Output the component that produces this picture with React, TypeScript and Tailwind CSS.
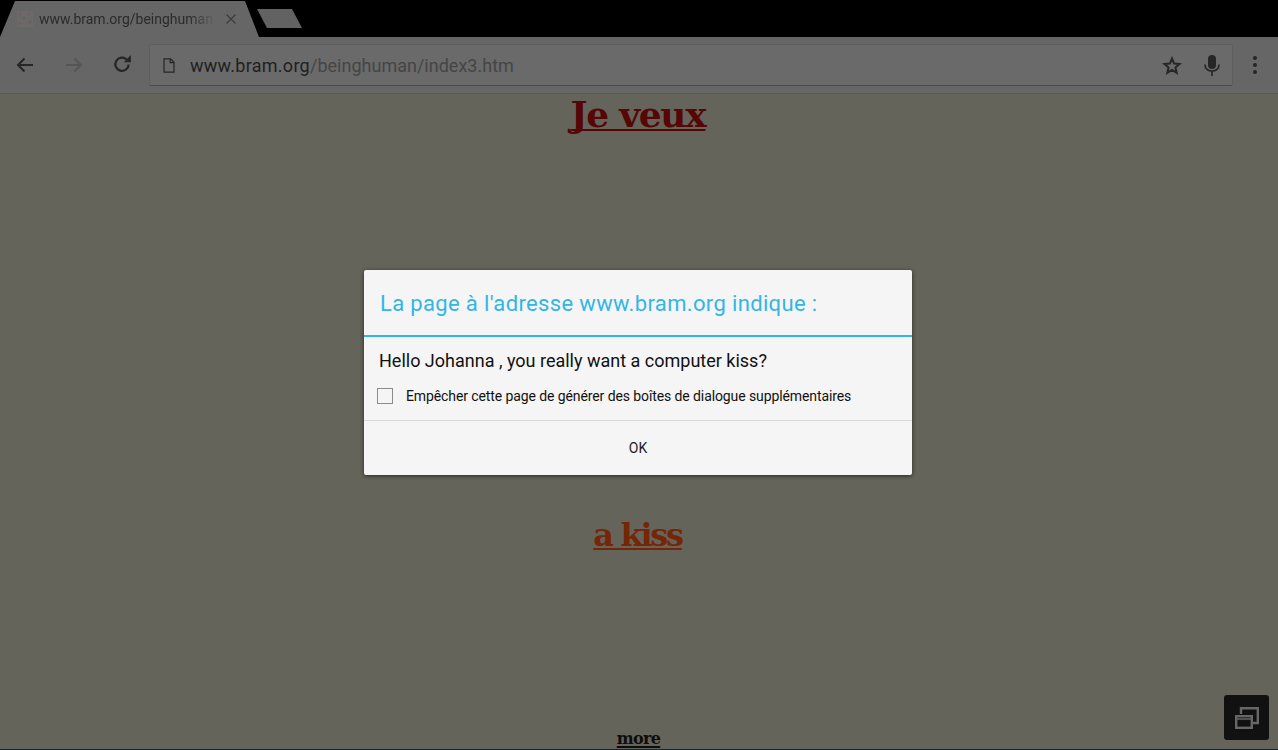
import React from 'react';

const roboto = "font-['Roboto',sans-serif]";
const serif = "font-['DejaVu_Serif',serif]";

function BackIcon({ className }: { className?: string }) {
  return (
    <svg viewBox="0 0 18 16" className={className} fill="none" stroke="currentColor" strokeWidth="2">
      <path d="M17 8H2M8.5 1.5 2 8l6.5 6.5" />
    </svg>
  );
}

function ReloadIcon() {
  return (
    <svg viewBox="0 0 18 18" className="w-5 h-5 text-[#262626]" fill="none">
      <path d="M15 9.500a6 6 0 1 1-1.800-4.600" stroke="currentColor" strokeWidth="2" />
      <path d="M10.600 7.400H17V1z" fill="currentColor" />
    </svg>
  );
}

function PageIcon() {
  return (
    <svg viewBox="0 0 12 15" className="w-3 h-[15px] text-[#262626]" fill="none" stroke="currentColor" strokeWidth="1.200">
      <path d="M1 .8h6.500L11 4.300v9.900H1zM7.200 .8v3.800H11" />
    </svg>
  );
}

function StarIcon() {
  return (
    <svg viewBox="0 0 20 19" className="w-5 h-[19px] text-[#262626]" fill="none" stroke="currentColor" strokeWidth="2">
      <path d="m10 2.600 2.100 5 5.400.4-4.100 3.500 1.300 5.300L10 14l-4.700 2.800 1.300-5.300L2.500 8l5.400-.4z" />
    </svg>
  );
}

function MicIcon() {
  return (
    <svg viewBox="0 0 16 21" className="w-4 h-[21px] text-[#262626]" fill="none">
      <rect x="4" y="0" width="8" height="14" rx="4" fill="currentColor" />
      <path d="M1 9.500c0 4 3 6.500 7 6.500s7-2.500 7-6.500M8 16v5" stroke="currentColor" strokeWidth="1.700" />
    </svg>
  );
}

function Favicon() {
  return (
    <svg viewBox="0 0 16 16" className="w-4 h-4 shrink-0">
      <rect width="16" height="16" fill="#6b6969" />
      <circle cx="3" cy="3" r="1.500" fill="#755f5f" />
      <circle cx="12" cy="2" r="1.500" fill="#755f5f" />
      <circle cx="7" cy="7" r="1.500" fill="#755a5a" />
      <circle cx="3" cy="12" r="1.500" fill="#755f5f" />
      <circle cx="13" cy="11" r="1.500" fill="#755a5a" />
    </svg>
  );
}

export default function App() {
  return (
    <div className={`relative w-[1278px] h-[750px] overflow-hidden bg-[#65645a] flex flex-col ${roboto}`}>
      {/* Tab strip */}
      <div className="h-[37px] bg-black flex shrink-0">
        <div className="w-[259px] h-9 mt-px bg-[#666666] [clip-path:polygon(0_100%,15px_0,245px_0,100%_100%)] flex items-center pl-[17px]">
          <Favicon />
          <div className="ml-1.5 w-[177px] whitespace-nowrap text-[14px] text-[#2b2b2b] mask-r-from-[85%] mask-r-to-100%">
            www.bram.org/beinghuman
          </div>
          <svg viewBox="0 0 10 10" className="ml-2.5 w-2.5 h-2.5 text-[#3d3d3d]" stroke="currentColor" strokeWidth="1.300">
            <path d="m.5.5 9 9M9.500.5l-9 9" />
          </svg>
        </div>
        <div className="-ml-0.5 mt-[9px] w-[45px] h-[19px] bg-[#626262] [clip-path:polygon(0_0,35px_0,100%_100%,10px_100%)]" />
      </div>

      {/* Toolbar */}
      <div className="h-[57px] bg-[#666666] border-b border-[#5a5a5a] shrink-0 flex items-center">
        <div className="w-[149px] flex items-center pl-4">
          <BackIcon className="w-[18px] h-4 text-[#262626]" />
          <BackIcon className="w-[18px] h-4 text-[#555555] ml-[31px] -scale-x-100" />
          <div className="ml-[29px] -mt-0.5"><ReloadIcon /></div>
        </div>
        <div className="w-[1084px] h-[42px] rounded-[2px] bg-[#6a6a6a] border border-[#5e5e5e] border-b-[#4a4a4a] flex items-center pl-[13px] pr-3">
          <PageIcon />
          <div className="ml-[15px] text-[18px] whitespace-nowrap text-[#1f1f1f] tracking-[0.27px]">
            www.bram.org<span className="text-[#454545] tracking-[0.01px]">/beinghuman/index3.htm</span>
          </div>
          <div className="ml-auto flex items-center gap-[22px]">
            <StarIcon />
            <MicIcon />
          </div>
        </div>
        <div className="ml-[20px] flex flex-col gap-[3px]">
          <div className="w-1 h-1 rounded-full bg-[#262626]" />
          <div className="w-1 h-1 rounded-full bg-[#262626]" />
          <div className="w-1 h-1 rounded-full bg-[#262626]" />
        </div>
      </div>

      {/* Page */}
      <div className={`flex-1 flex flex-col items-center font-bold ${serif}`}>
        <div className="h-[405px] mr-0.5 text-[36px] leading-[40px] tracking-[-1.300px] text-[#560606] underline decoration-2 underline-offset-2 [text-decoration-skip-ink:none]">
          Je veux
        </div>
        <div className="h-[216px] mt-[15px] mr-[3px] text-[32px] leading-[42px] tracking-[-2.300px] text-[#752606] underline decoration-2 underline-offset-2 [text-decoration-skip-ink:none]">
          a kiss
        </div>
        <div className="text-[16px] leading-5 -mt-px mr-px tracking-[-0.700px] text-[#0d0d0d] underline decoration-2 underline-offset-2">
          more
        </div>
      </div>
      <div className="h-px bg-[#0f2a30] shrink-0" />

      {/* Alert dialog */}
      <div className="absolute left-[364px] top-[270px] w-[548px] h-[205px] rounded-[2px] bg-[#f5f5f5] shadow-[0_1px_4px_rgba(0,0,0,0.6)] flex flex-col">
        <div className="h-[65px] pt-0.5 flex items-center pl-4 text-[22px] tracking-[0.35px] text-[#33b5e5] shrink-0">
          La page à l'adresse www.bram.org indique :
        </div>
        <div className="h-0.5 bg-[#33b5e5] shrink-0" />
        <div className="pl-[15px] mt-[13px] text-[18px] leading-[22px] text-[#111111]">
          Hello Johanna , you really want a computer kiss?
        </div>
        <div className="flex items-center pl-[13px] mt-[15px]">
          <div className="w-4 h-4 border border-[#8c8c8c]" />
          <div className="ml-[13px] text-[14px] leading-[18px] tracking-[-0.1px] text-[#111111]">
            Empêcher cette page de générer des boîtes de dialogue supplémentaires
          </div>
        </div>
        <div className="flex-1 mt-[15px] border-t border-[#d8d8d8] flex items-center justify-center text-[14px] text-[#222222]">
          OK
        </div>
      </div>

      {/* Recent apps button */}
      <div className="absolute left-[1224px] top-[695px] w-[45px] h-[45px] rounded-[3px] bg-[#111111] flex items-center justify-center">
        <svg viewBox="0 0 24 22" className="w-6 h-[22px] text-[#666666]" fill="none" stroke="currentColor" strokeWidth="2.400">
          <path d="M6 7V1.200h16.800V16H17" />
          <rect x="1.200" y="9.200" width="15.600" height="11.600" />
          <path d="M1 12h16" strokeWidth="1.500" />
        </svg>
      </div>
    </div>
  );
}
